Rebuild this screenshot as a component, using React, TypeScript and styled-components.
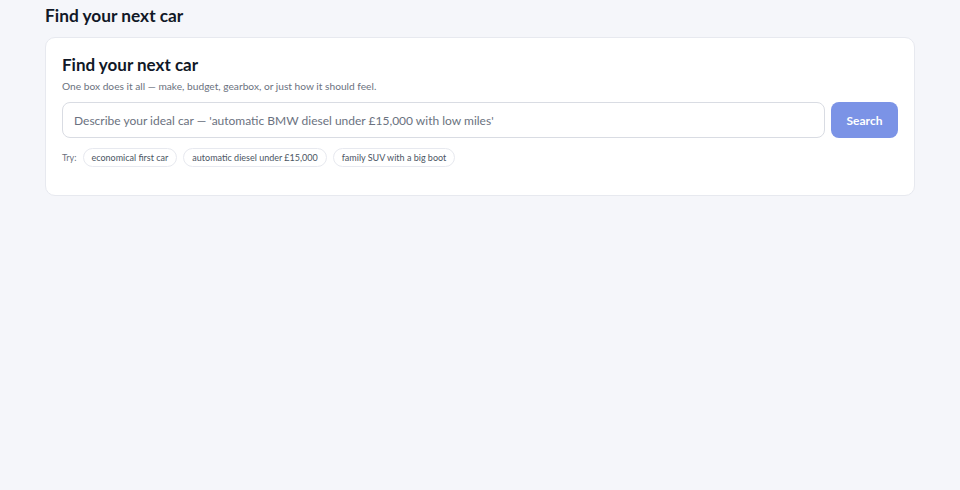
import { useState } from "react";
import styled, { createGlobalStyle } from "styled-components";

const GlobalStyle = createGlobalStyle`
    html, body {
        margin: 0;
        padding: 0;
        background-color: #f5f6fa;
        font-family: Lato, "Noto Sans", sans-serif;
        color: #111827;
    }
    * {
        box-sizing: border-box;
    }
`

const Page = styled.div`
    min-height: 490px;
    padding: 6px 45px 0 45px;

    h1 {
        margin: 0 0 11px 0;
        font-size: 17.3px;
        font-weight: 700;
        line-height: 20px;
        color: #111827;
    }
`

const Card = styled.section`
    background-color: #fff;
    border: 1px solid #e7e9ef;
    border-radius: 10px;
    padding: 16px 16px 28px 16px;

    h2 {
        margin: 0;
        font-size: 17px;
        font-weight: 700;
        line-height: 22px;
        color: #111827;
    }

    p {
        margin: 3px 0 0 0;
        font-size: 10.2px;
        line-height: 14px;
        color: #6b7280;
    }
`

const SearchRow = styled.form`
    display: flex;
    gap: 6px;
    margin-top: 9px;
`

const Input = styled.input`
    flex: 1;
    height: 36px;
    padding: 0 11px;
    border: 1px solid #d9dce3;
    border-radius: 8px;
    font-family: Lato, "Noto Sans", sans-serif;
    font-size: 12px;
    color: #111827;
    outline: none;

    &::placeholder {
        color: #6b7280;
    }
`

const Button = styled.button`
    width: 67px;
    height: 36px;
    border: none;
    border-radius: 8px;
    background-color: #7b93e6;
    color: #fff;
    font-family: Lato, "Noto Sans", sans-serif;
    font-size: 12px;
    font-weight: 700;
    cursor: pointer;
`

const Suggestions = styled.div`
    display: flex;
    align-items: center;
    gap: 6px;
    margin-top: 10px;

    label {
        font-size: 9px;
        color: #6b7280;
    }
`

const Chip = styled.button`
    height: 19px;
    padding: 0 8px;
    border: 1px solid #e7e9ef;
    border-radius: 10px;
    background-color: #fff;
    color: #4b5563;
    font-family: Lato, "Noto Sans", sans-serif;
    font-size: 9px;
    cursor: pointer;
`

const examples = [
    "economical first car",
    "automatic diesel under £15,000",
    "family SUV with a big boot",
];

export default function App() {
    const [query, setQuery] = useState("");

    return (
        <Page>
            <GlobalStyle />
            <h1>Find your next car</h1>
            <Card>
                <h2>Find your next car</h2>
                <p>One box does it all — make, budget, gearbox, or just how it should feel.</p>
                <SearchRow onSubmit={(e) => e.preventDefault()}>
                    <Input
                        value={query}
                        onChange={(e) => setQuery(e.target.value)}
                        placeholder="Describe your ideal car — 'automatic BMW diesel under £15,000 with low miles'"
                    />
                    <Button type="submit">Search</Button>
                </SearchRow>
                <Suggestions>
                    <label>Try:</label>
                    {examples.map((text) => (
                        <Chip key={text} type="button" onClick={() => setQuery(text)}>
                            {text}
                        </Chip>
                    ))}
                </Suggestions>
            </Card>
        </Page>
    );
}
